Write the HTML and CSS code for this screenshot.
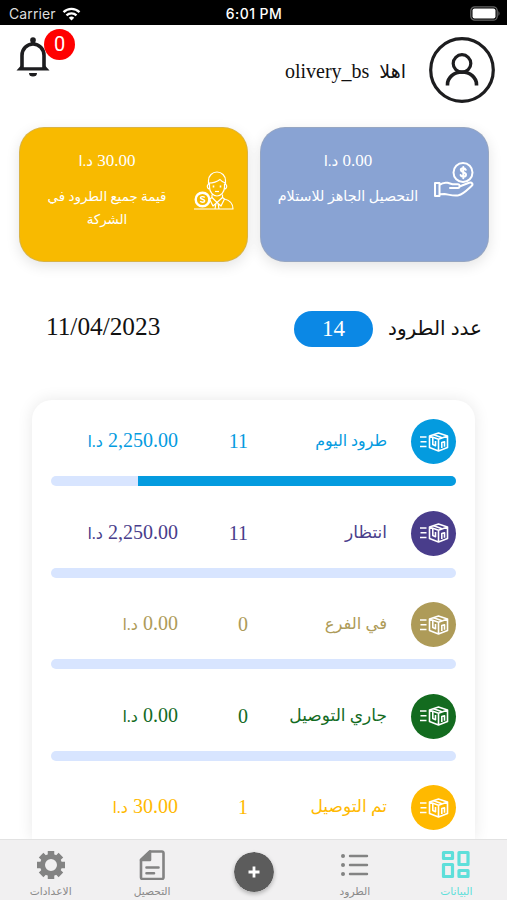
FILE: index.html
```
<!DOCTYPE html>
<html lang="ar" dir="rtl">
<head>
<meta charset="utf-8">
<title>Olivery</title>
<link rel="stylesheet" href="styles.css">
</head>
<body>
<svg width="0" height="0" class="defs">
  <symbol id="box" viewBox="0 0 30 20">
    <g fill="none" stroke="#fff" stroke-width="1.600" stroke-linejoin="round">
      <path d="M1 5h6.500M1.500 9.800h6M1 14.500h6.500"/>
      <path d="M10.500 4 19.500 1l9 3v11.500l-9 3.500-9-3.500zM10.500 4l9 3.200 9-3.200M19.500 7.200V19M14.500 2.800l8 2.700"/>
      <path d="M13.800 5.500v7l2.700 1.200V9M22.800 16v-5.500l2.700-.8v5"/>
    </g>
  </symbol>
</svg>
<div class="app">
  <div class="status" dir="ltr">
    <div class="carrier">Carrier
      <svg width="19" height="14" viewBox="0 0 18 14" fill="none" stroke="#fff" stroke-width="2.300"><path d="M1 5.200a11.500 11.500 0 0 1 16 0M4 8.400a7.200 7.200 0 0 1 10 0"/><path d="M6.300 10.700a4 4 0 0 1 5.400 0L9 13.400z" fill="#fff" stroke="none"/></svg>
    </div>
    <div class="clock">6:01 PM</div>
    <div class="power"><svg width="31" height="15" viewBox="0 0 31 15"><rect x=".8" y=".8" width="26.400" height="13.400" rx="4" fill="none" stroke="#666" stroke-width="1.300"/><rect x="2.500" y="2.500" width="23" height="10" rx="2" fill="#fff"/><path d="M28.500 5q2 2.500 0 5z" fill="#777"/></svg></div>
  </div>
  <header class="header">
    <div class="user">
      <svg width="66" height="66" viewBox="0 0 66 66" fill="none" stroke="#1d1d1f"><circle cx="33" cy="33" r="31.300" stroke-width="3.200"/><circle cx="33" cy="26.500" r="8.800" stroke-width="3.200"/><path d="M18.500 48.500v-1a14.500 12.500 0 0 1 29 0v1" stroke-width="3.600"/></svg>
      <span class="hello">اهلا</span><span class="name">olivery_bs</span>
    </div>
    <div class="bell">
      <svg width="34" height="40" viewBox="0 0 34 40"><path d="M6 32V18.500a11 11.500 0 0 1 22 0V32" fill="none" stroke="#1d1d1f" stroke-width="3.600"/><circle cx="17" cy="3" r="2.800" fill="#1d1d1f"/><path d="M14.800 3h4.400v5h-4.400zM.5 33.500 5 28.500v1.700h24v-1.700l4.500 5zM13 36h8a4 3.500 0 0 1-8 0z" fill="#1d1d1f"/></svg>
      <span class="badge">0</span>
    </div>
  </header>
  <section class="cards">
    <div class="card blue">
      <svg class="hand" width="40" height="36" viewBox="0 0 40 36" fill="none" stroke="#fff" stroke-width="2" stroke-linejoin="round" stroke-linecap="round"><circle cx="29" cy="10.500" r="9.500"/><path d="M31.800 7.800c-.8-2-5-2-5 .3 0 2.600 5.200 1.800 5.200 4.600 0 2.600-4.800 2.500-5.400.2M29.300 5v11.200"/><path d="M1 21h4.500v13H1zM5.500 23q3.500-3 8-2.200l5 1.500h5.500c2.500.3 2 3.700 0 3.700h-8M25.500 24.500l9.500-3.700c3-.9 4.500 1.500 2.500 3.200-4.500 4-8 8-13 9.300-4.500 1-10-.8-14-1.300l-5 .3"/></svg>
      <div class="text"><p class="sum">0.00 <b>د.ا</b></p><p class="label">التحصيل الجاهز للاستلام</p></div>
    </div>
    <div class="card yellow">
      <svg class="agent" width="40" height="40" viewBox="0 0 40 40" fill="none" stroke="#fff" stroke-width="1.200" stroke-linejoin="round"><circle cx="8.500" cy="28.500" r="6.800" stroke-width="2.400"/><path d="M10.700 26.500c-1.200-1.500-4.500-1-4.200.5s4 1.100 4.200 2.900c-.2 1.700-3.500 1.800-4.500.2" stroke-width="1.400"/><path d="M14.500 13V9.500a8.500 8.500 0 0 1 17 0V13M14.500 12c4 0 9-1.500 11.500-3.500 1.500 2 3.500 3 5.500 3.500M15.500 12.500v3.500c0 5 3.500 9 7.500 9s7.500-4 7.500-9v-3.500M15.500 13c-3 0-3 5 .5 5M30.500 13c3 0 3 5-.5 5M18 23.500v3l5 5 5.500-5v-3M18 26.500l-2.500 1.500 3.500 7 4-3.500 4 3.500 3.500-7-2-1.500M30.500 28c5 1.200 8.500 3.500 8.500 10M0 38h39.500M22 32l-1 6M24 32l1 6"/><path d="M19.500 14.500v2M26.500 14.500v2" stroke-width="1.600"/><path d="M21 20.500h4"/></svg>
      <div class="text"><p class="sum">30.00 <b>د.ا</b></p><p class="label">قيمة جميع الطرود في الشركة</p></div>
    </div>
  </section>
  <section class="summary">
    <span class="title">عدد الطرود</span><span class="pill">14</span><span class="date">11/04/2023</span>
  </section>
  <main class="panel">
    <div class="item today"><div class="line"><i><svg width="30" height="20"><use href="#box"/></svg></i><span class="kind">طرود اليوم</span><span class="count">11</span><span class="price">2,250.00 <b>د.ا</b></span></div><div class="track"><div class="fill" style="width:78.600%"></div></div></div>
    <div class="item waiting"><div class="line"><i><svg width="30" height="20"><use href="#box"/></svg></i><span class="kind">انتظار</span><span class="count">11</span><span class="price">2,250.00 <b>د.ا</b></span></div><div class="track"></div></div>
    <div class="item branch"><div class="line"><i><svg width="30" height="20"><use href="#box"/></svg></i><span class="kind">في الفرع</span><span class="count">0</span><span class="price">0.00 <b>د.ا</b></span></div><div class="track"></div></div>
    <div class="item moving"><div class="line"><i><svg width="30" height="20"><use href="#box"/></svg></i><span class="kind">جاري التوصيل</span><span class="count">0</span><span class="price">0.00 <b>د.ا</b></span></div><div class="track"></div></div>
    <div class="item done"><div class="line"><i><svg width="30" height="20"><use href="#box"/></svg></i><span class="kind">تم التوصيل</span><span class="count">1</span><span class="price">30.00 <b>د.ا</b></span></div><div class="track"></div></div>
  </main>
  <nav class="tabs">
    <a class="tab active"><svg width="30" height="30" viewBox="0 0 30 30" fill="none" stroke="#5edfda" stroke-width="3.200" stroke-linejoin="round"><path d="M2.500 2.500h9v6h-9zM18 2.500h9v12h-9zM2.500 14.500h9v12h-9zM18 20.500h9v6h-9z"/></svg><span>البيانات</span></a>
    <a class="tab"><svg width="30" height="30" viewBox="0 0 30 30" fill="none" stroke="#838383" stroke-width="2.400" stroke-linecap="round"><path d="M10 6h17M10 15h17M10 24h17"/><path d="M3 6h.01M3 15h.01M3 24h.01" stroke-width="4"/></svg><span>الطرود</span></a>
    <a class="plus"><svg width="40" height="40" viewBox="0 0 40 40"><circle cx="20" cy="20" r="20" fill="#5c5c5c"/><path d="M20 14.500v11M14.500 20h11" stroke="#fff" stroke-width="2.800"/></svg></a>
    <a class="tab"><svg width="30" height="30" viewBox="0 0 30 30" fill="none" stroke="#838383" stroke-width="2.600" stroke-linejoin="round"><path d="M13 1.500h12a1.500 1.500 0 0 1 1.500 1.500v24.500a1.500 1.500 0 0 1-1.500 1.500H5.500A1.500 1.500 0 0 1 4 27.500V10z"/><path d="M13 1.500V10H4z" fill="#838383"/><path d="M9.500 17.500h12M9.500 23.300h7.500" stroke-linecap="round"/></svg><span>التحصيل</span></a>
    <a class="tab"><svg width="30" height="30" viewBox="-15 -15 30 30"><circle r="8.500" fill="none" stroke="#838383" stroke-width="5"/><g stroke="#838383" stroke-width="6.500"><path d="M0-10v-4M0 10v4M10 0h4M-10 0h-4"/><path d="m7-7 2.900-2.900M-7 7l-2.900 2.900M7 7l2.900 2.900M-7-7l-2.900-2.900"/></g></svg><span>الاعدادات</span></a>
  </nav>
</div>
</body>
</html>
```
FILE: styles.css
```
* { box-sizing: border-box; }
body { margin: 0; font-family: "Liberation Serif", "DejaVu Sans", serif; color: #111; background: #fff; }
p { margin: 0; }
b, i { font-weight: normal; font-style: normal; }
.defs { position: absolute; }
.app { width: 507px; height: 900px; display: flex; flex-direction: column; overflow: hidden; }
.status { height: 25px; flex: none; background: #000; color: #ddd; display: grid; grid-template-columns: 1fr 1fr 1fr; align-items: center; padding: 2px 6px 0 9px; font: 14px Inter, sans-serif; }
.carrier { display: flex; gap: 6px; align-items: center; letter-spacing: .1px; }
.clock { text-align: center; color: #fff; font-weight: 500; letter-spacing: .45px; margin-left: -2px; }
.power { display: flex; justify-content: flex-end; }
.header { height: 102px; flex: none; display: flex; justify-content: space-between; padding: 12px 12px 0 16px; }
.user { display: flex; height: 66px; align-items: center; }
.hello { font-size: 19px; margin-right: 23px; padding-top: 3px; }
.name { font-size: 20px; margin-right: 10px; padding-top: 3px; }
.bell { position: relative; width: 60px; height: 40px; direction: ltr; }
.badge { position: absolute; left: 28px; top: -8px; width: 31px; height: 31px; border-radius: 50%; background: #f00; color: #fff; font: 20px/31px Roboto, sans-serif; text-align: center; }
.cards { flex: none; height: 135px; display: grid; grid-template-columns: 229px 229px; gap: 12px; padding-right: 18px; }
.card { border-radius: 25px; color: #fff; display: flex; box-shadow: 0 4px 14px #0000001c; border: 1px solid #aaa6; }
.blue { background: #89a3d3; }
.yellow { background: #f8ba00; }
.hand { margin: 34px 14px 0 0; }
.agent { margin: 43px 13px 0 0; }
.text { text-align: center; }
.blue .text { width: 172px; }
.yellow .text { width: 170px; padding: 0 16px; margin-right: 2px; }
.sum { font-size: 17px; line-height: 24px; margin-top: 21px; white-space: nowrap; }
.label { font-size: 14.300px; line-height: 23px; margin-top: 12px; white-space: nowrap; }
.yellow .label { font-size: 13.400px; white-space: normal; }
.sum b { font-size: 15px; }
.summary { flex: none; height: 138px; display: flex; align-items: flex-start; padding: 49px 25px 0 46px; }
.title { width: 96px; font-size: 20px; line-height: 34px; white-space: nowrap; }
.pill { width: 79px; height: 36px; margin-right: 13px; border-radius: 18px; background: #0b88e5; color: #fff; font-size: 23px; line-height: 35px; text-align: center; }
.date { margin-right: auto; font-size: 25.300px; line-height: 30px; }
.panel { flex: none; width: 443px; height: 439px; margin-right: 32px; border-radius: 20px 20px 0 0; box-shadow: 0 0 16px #00000018; padding: 19px 19px 0 19px; overflow: hidden; }
.item { height: 91.600px; }
.line { display: grid; grid-template-columns: 45px 136px 77px 1fr; height: 45px; align-items: center; color: var(--c); }
.line i { width: 45px; height: 45px; border-radius: 50%; background: var(--c); display: grid; place-items: center; }
.kind { font-size: 17px; padding: 0 24px 2px 0; white-space: nowrap; }
.today .kind { font-size: 15.800px; }
.branch .kind { font-size: 16.400px; }
.count { font-size: 20px; padding-right: 27px; }
.price { font-size: 20px; padding: 0 20px 2px 0; white-space: nowrap; }
.price b { font-size: 16px; }
.track { height: 10px; border-radius: 5px; background: #d8e5ff; margin-top: 12px; overflow: hidden; }
.fill { height: 10px; background: var(--c); }
.today { --c: #049bdf; }
.waiting { --c: #493d8b; }
.branch { --c: #ae9b58; }
.moving { --c: #136b1f; }
.done { --c: #ffb900; }
.tabs { position: relative; flex: none; height: 61px; background: #f1f0f1; border-top: 1px solid #e2e2e2; display: grid; grid-template-columns: repeat(5, 1fr); }
.tab { display: flex; flex-direction: column; align-items: center; padding-top: 10px; color: #8a8a8a; font-size: 10.700px; line-height: 14px; }
.tab span { margin-top: 4px; }
.active { color: #5edfda; }
.plus { display: flex; justify-content: center; padding-top: 12px; }
.plus svg { border-radius: 50%; box-shadow: 0 2px 4px #0004; }
```
